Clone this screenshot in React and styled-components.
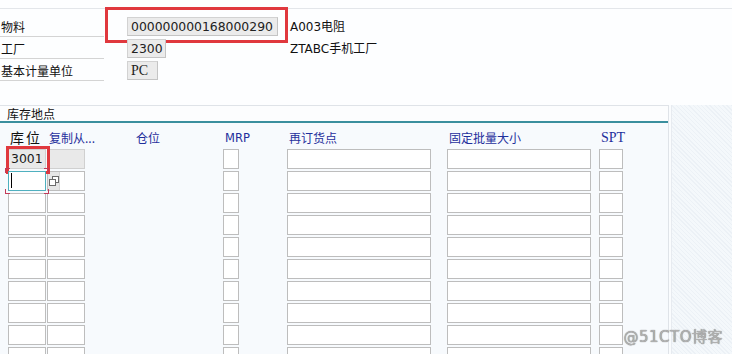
import styled, { createGlobalStyle } from "styled-components"

const GlobalStyle = createGlobalStyle`
	html, body {
		margin: 0;
		padding: 0;
		background: #fdfeff;
	}
	body {
		font-family: "Noto Sans CJK SC", "DejaVu Sans", sans-serif;
		font-size: 12px;
		color: #111;
	}
`

const topRows = [
	{ label: "物料", value: "000000000168000290", width: 151, desc: "A003电阻", mark: true },
	{ label: "工厂", value: "2300", width: 39, desc: "ZTABC手机工厂" },
	{ label: "基本计量单位", value: "PC", width: 31, serif: true },
]

const ROWS = 10

function CopyIcon () {
	return (
		<svg width="10" height="10" viewBox="0 0 10 10">
			<rect x="3.5" y="0.5" width="6" height="6" fill="#fff" stroke="#6b6b6b" />
			<rect x="0.5" y="3.5" width="6" height="6" fill="#fff" stroke="#6b6b6b" />
		</svg>
	)
}

function App () {
	const rows = Array.from({ length: ROWS }, (_, i) => i)

	return (
		<Page>
			<GlobalStyle />
			<TopForm>
				{topRows.map(r => (
					<FormRow key={r.label}>
						<Label>{r.label}</Label>
						<FieldWrap>
							<Field $w={r.width} $serif={r.serif}>{r.value}</Field>
							{r.mark && <MaterialMark />}
						</FieldWrap>
						<Desc>{r.desc}</Desc>
					</FormRow>
				))}
			</TopForm>

			<Lower>
				<Section>
					<SectionTitle>库存地点</SectionTitle>
					<Table>
						<MainHead>库位</MainHead>
						<Head>复制从...</Head>
						<Head>仓位</Head>
						<Head $latin>MRP</Head>
						<Head>再订货点</Head>
						<Head>固定批量大小</Head>
						<Head $serif>SPT</Head>

						{rows.map(i => (
							<Row key={i}>
								{i === 0 && (
									<FieldWrap>
										<Cell $w={38} $gray>3001</Cell>
										<StorageMark />
									</FieldWrap>
								)}
								{i === 1 && <FocusCell><Caret /></FocusCell>}
								{i > 1 && <Cell $w={38} />}

								{i === 0 && <Cell $w={38} $gray />}
								{i === 1 && (
									<CopyCell>
										<IconBox><CopyIcon /></IconBox>
									</CopyCell>
								)}
								{i > 1 && <Cell $w={38} />}

								<span />
								<Cell $w={16} />
								<Cell $w={144} />
								<Cell $w={144} />
								<Cell $w={24} />
							</Row>
						))}
					</Table>
				</Section>
				<Filler />
			</Lower>

			<Watermark>@51CTO博客</Watermark>
		</Page>
	)
}

const Page = styled.div`
	position: relative;
	width: 732px;
	height: 354px;
	overflow: hidden;
	background: #fdfeff;
`

const TopForm = styled.div`
	margin-top: 8px;
	border-top: 1px solid #e3e6ea;
	padding-top: 6px;
`

const FormRow = styled.div`
	display: grid;
	grid-template-columns: 127px 163px 1fr;
	height: 22px;
	align-items: center;
`

const Label = styled.div`
	align-self: stretch;
	width: 104px;
	padding-left: 1px;
	box-sizing: border-box;
	border-bottom: 1px solid #d4d4d4;
	display: flex;
	align-items: flex-end;
	line-height: 16px;
	padding-bottom: 1px;
`

const FieldWrap = styled.div`
	position: relative;
	display: inline-flex;
	width: max-content;
`

const Field = styled.div`
	width: ${p => p.$w}px;
	height: 19px;
	box-sizing: border-box;
	background: #ebebeb;
	border: 1px solid #d2d2d2;
	border-right-color: #c4c4c4;
	border-bottom-color: #c4c4c4;
	padding-left: 3px;
	font-family: ${p => p.$serif ? '"Liberation Serif", serif' : '"DejaVu Sans", sans-serif'};
	font-size: ${p => p.$serif ? "14px" : "12.4px"};
	line-height: 17px;
	color: #222;
	white-space: nowrap;
`

const Mark = styled.div`
	position: absolute;
	border: 3px solid #e0383e;
	pointer-events: none;
`

const MaterialMark = styled(Mark)`
	left: -22px;
	right: -10px;
	top: -10px;
	bottom: -7px;
`

const StorageMark = styled(Mark)`
	left: -2px;
	right: -4px;
	top: -3px;
	bottom: -5px;
`

const Desc = styled.div`
	font-family: "DejaVu Sans", "Noto Sans CJK SC", sans-serif;
	font-size: 12px;
	line-height: 16px;
	padding-top: 1px;
`

const Lower = styled.div`
	display: flex;
	margin-top: 24px;
	height: 260px;
`

const Section = styled.div`
	width: 668px;
	border-top: 1px solid #dfe3e8;
	border-right: 1px solid #dfe3e8;
	box-shadow: 2px 0 0 #fafcfe, 3px 0 0 #e7ebf0;
	background: #f7fafd;
`

const SectionTitle = styled.div`
	height: 15px;
	padding-left: 7px;
	background: #fcfdfe;
	border-bottom: 2px solid #3a8f9e;
	line-height: 16px;
	font-size: 12px;
	color: #111;
`

const Table = styled.div`
	display: grid;
	grid-template-columns: 39px 87px 89px 64px 160px 152px 23px;
	grid-auto-rows: 20px;
	grid-template-rows: 24px;
	row-gap: 2px;
	padding-left: 8px;
`

const Row = styled.div`
	display: contents;
`

const Head = styled.div`
	align-self: end;
	padding-left: 2px;
	padding-bottom: 1px;
	white-space: nowrap;
	line-height: 16px;
	font-size: ${p => p.$serif ? "14px" : p.$latin ? "11.5px" : "12px"};
	font-family: ${p => p.$serif
		? '"Liberation Serif", serif'
		: p.$latin ? '"DejaVu Sans", sans-serif' : '"Noto Sans CJK SC", sans-serif'};
	color: #1f2f9c;
`

const MainHead = styled(Head)`
	color: #111;
	font-size: 14px;
	letter-spacing: 2px;
	line-height: 17px;
	padding-left: 2px;
`

const Cell = styled.div`
	width: ${p => p.$w}px;
	height: 20px;
	box-sizing: border-box;
	border: 1px solid ${p => p.$gray ? "#d0d0d0" : "#bdbdbd"};
	background: ${p => p.$gray ? "#e9e9e9" : "#ffffff"};
	padding-left: 2px;
	font-family: "DejaVu Sans", sans-serif;
	font-size: 12.4px;
	line-height: 18px;
	color: #1a1a1a;
`

const FocusCell = styled(Cell).attrs({ $w: 38 })`
	position: relative;
	border-color: #4fb0bf;
	&::after {
		content: "";
		position: absolute;
		left: -4px;
		top: -4px;
		right: -4px;
		bottom: -4px;
		pointer-events: none;
		background:
			linear-gradient(#c23b5a, #c23b5a) left top / 5px 1px no-repeat,
			linear-gradient(#c23b5a, #c23b5a) left top / 1px 5px no-repeat,
			linear-gradient(#c23b5a, #c23b5a) right top / 5px 1px no-repeat,
			linear-gradient(#c23b5a, #c23b5a) right top / 1px 5px no-repeat,
			linear-gradient(#c23b5a, #c23b5a) left bottom / 5px 1px no-repeat,
			linear-gradient(#c23b5a, #c23b5a) left bottom / 1px 5px no-repeat,
			linear-gradient(#c23b5a, #c23b5a) right bottom / 5px 1px no-repeat,
			linear-gradient(#c23b5a, #c23b5a) right bottom / 1px 5px no-repeat;
	}
`

const Caret = styled.span`
	display: block;
	width: 1px;
	height: 15px;
	margin-top: 1px;
	background: #000;
`

const CopyCell = styled(Cell).attrs({ $w: 38 })`
	display: flex;
	padding-left: 0;
`

const IconBox = styled.div`
	width: 11px;
	height: 100%;
	background: #e6e6e6;
	border-right: 1px solid #d6d6d6;
	display: flex;
	align-items: center;
	justify-content: center;
`

const Filler = styled.div`
	flex: 1;
	margin-left: 3px;
	background-color: #f4f8fb;
	background-image: repeating-linear-gradient(45deg, #ecf1f6 0 1px, transparent 1px 3px);
`

const Watermark = styled.div`
	position: absolute;
	right: 9px;
	bottom: 8px;
	font-family: "DejaVu Sans", "Noto Sans CJK SC", sans-serif;
	font-size: 15px;
	color: #b0b0b0;
	text-shadow: 0 0 1px #666;
	letter-spacing: 0.5px;
`

export default App
